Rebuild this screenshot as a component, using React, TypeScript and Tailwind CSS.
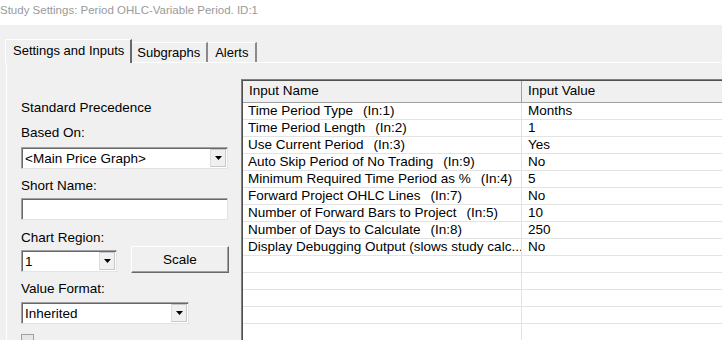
import React from "react";

const rows: [string, string, string][] = [
  ["Time Period Type", "(In:1)", "Months"],
  ["Time Period Length", "(In:2)", "1"],
  ["Use Current Period", "(In:3)", "Yes"],
  ["Auto Skip Period of No Trading", "(In:9)", "No"],
  ["Minimum Required Time Period as %", "(In:4)", "5"],
  ["Forward Project OHLC Lines", "(In:7)", "No"],
  ["Number of Forward Bars to Project", "(In:5)", "10"],
  ["Number of Days to Calculate", "(In:8)", "250"],
  ["Display Debugging Output (slows study calc...", "", "No"],
  ["", "", ""],
  ["", "", ""],
  ["", "", ""],
  ["", "", ""],
  ["", "", ""],
  ["", "", ""],
];

function Arrow() {
  return (
    <div className="h-full w-[16px] flex items-center justify-center bg-[#f0f0f0] border border-[#c8c8c8] border-l-[#dcdcdc]">
      <svg width="7" height="4" viewBox="0 0 7 4">
        <path d="M0 0H7L3.5 4Z" fill="#000" />
      </svg>
    </div>
  );
}

function Select({ value, width }: { value: string; width: string }) {
  return (
    <div
      className={`${width} h-[22px] bg-white flex items-stretch border border-[#a0a0a0] border-b-[#e3e3e3] border-r-[#e3e3e3] shadow-[inset_1px_1px_0_#696969]`}
    >
      <div className="flex-1 pl-[3px] pt-[1px] leading-[19px] text-black overflow-hidden whitespace-nowrap">
        {value}
      </div>
      <div className="py-[1px] pr-[1px]">
        <Arrow />
      </div>
    </div>
  );
}

export default function App() {
  return (
    <div
      className="w-[722px] h-[340px] overflow-hidden flex flex-col bg-[#f0f0f0] text-[13.5px] text-black"
      style={{ fontFamily: '"Liberation Sans", Arial, sans-serif' }}
    >
      <div className="h-[25px] shrink-0 bg-white text-[#9a9a9a] text-[11.5px] leading-[20px] whitespace-nowrap">
        Study Settings: Period OHLC-Variable Period. ID:1
      </div>
      {/* tabs */}
      <div className="flex items-end pl-[5px] mt-[14px] h-[23px] shrink-0 text-[13px]">
        <div className="h-[24px] -mb-px relative z-10 bg-[#f0f0f0] border-t border-l border-white border-r-2 border-r-[#696969] pl-[7px] pr-[6px] leading-[22px]">
          Settings and Inputs
        </div>
        <div className="h-[20px] border-t border-white border-r-2 border-r-[#8a8a8a] pl-[5px] pr-[6px] leading-[19px]">
          Subgraphs
        </div>
        <div className="h-[20px] border-t border-white border-r-2 border-r-[#8a8a8a] pl-[7px] pr-[7px] leading-[19px]">
          Alerts
        </div>
      </div>
      {/* panel */}
      <div className="flex-1 flex ml-[6px] border-t border-l border-white min-h-0">
        {/* left column */}
        <div className="w-[234px] flex flex-col pl-[14px] pt-[37px] leading-[16px] *:shrink-0 overflow-hidden">
          <div>Standard Precedence</div>
          <div className="mt-[9px]">Based On:</div>
          <div className="mt-[6px]">
            <Select value="<Main Price Graph>" width="w-[207px]" />
          </div>
          <div className="mt-[9px]">Short Name:</div>
          <div className="mt-[4px] w-[207px] h-[22px] bg-white border border-[#a0a0a0] border-b-[#e3e3e3] border-r-[#e3e3e3] shadow-[inset_1px_1px_0_#696969]" />
          <div className="mt-[10px]">Chart Region:</div>
          <div className="flex items-start">
            <div className="mt-[4px]">
              <Select value="1" width="w-[96px]" />
            </div>
            <div className="ml-[14px] w-[98px] h-[27px] bg-[#f0f0f0] border border-white border-r-[#696969] border-b-[#696969] shadow-[inset_-1px_-1px_0_#a0a0a0] flex items-center justify-center">
              Scale
            </div>
          </div>
          <div className="mt-[8px]">Value Format:</div>
          <div className="mt-[5px]">
            <Select value="Inherited" width="w-[168px]" />
          </div>
          <div className="mt-[10px] w-[13px] h-[13px] bg-[#e6e6e6] border border-[#a0a0a0]" />
        </div>
        {/* table */}
        <div className="flex-1 mt-[16px] bg-white border-t border-l border-[#808080] shadow-[inset_1px_1px_0_#505050] pl-[1px] pt-[1px] flex flex-col min-w-0">
          <div className="h-[22px] flex bg-[#f0f0f0] border-b border-[#a0a0a0] leading-[20px] shrink-0">
            <div className="w-[279px] pl-[6px] border-r border-[#a0a0a0] whitespace-nowrap">Input Name</div>
            <div className="pl-[6px] whitespace-nowrap">Input Value</div>
          </div>
          {rows.map((r, i) => (
            <div key={i} className="h-[17px] shrink-0 flex border-b border-[#e3e3e3] leading-[16px]">
              <div className="w-[279px] pl-[5px] border-r border-[#e3e3e3] whitespace-nowrap overflow-hidden">
                {r[0]}
                {r[1] && <span className="ml-[10px]">{r[1]}</span>}
              </div>
              <div className="pl-[6px] whitespace-nowrap">{r[2]}</div>
            </div>
          ))}
        </div>
      </div>
    </div>
  );
}
